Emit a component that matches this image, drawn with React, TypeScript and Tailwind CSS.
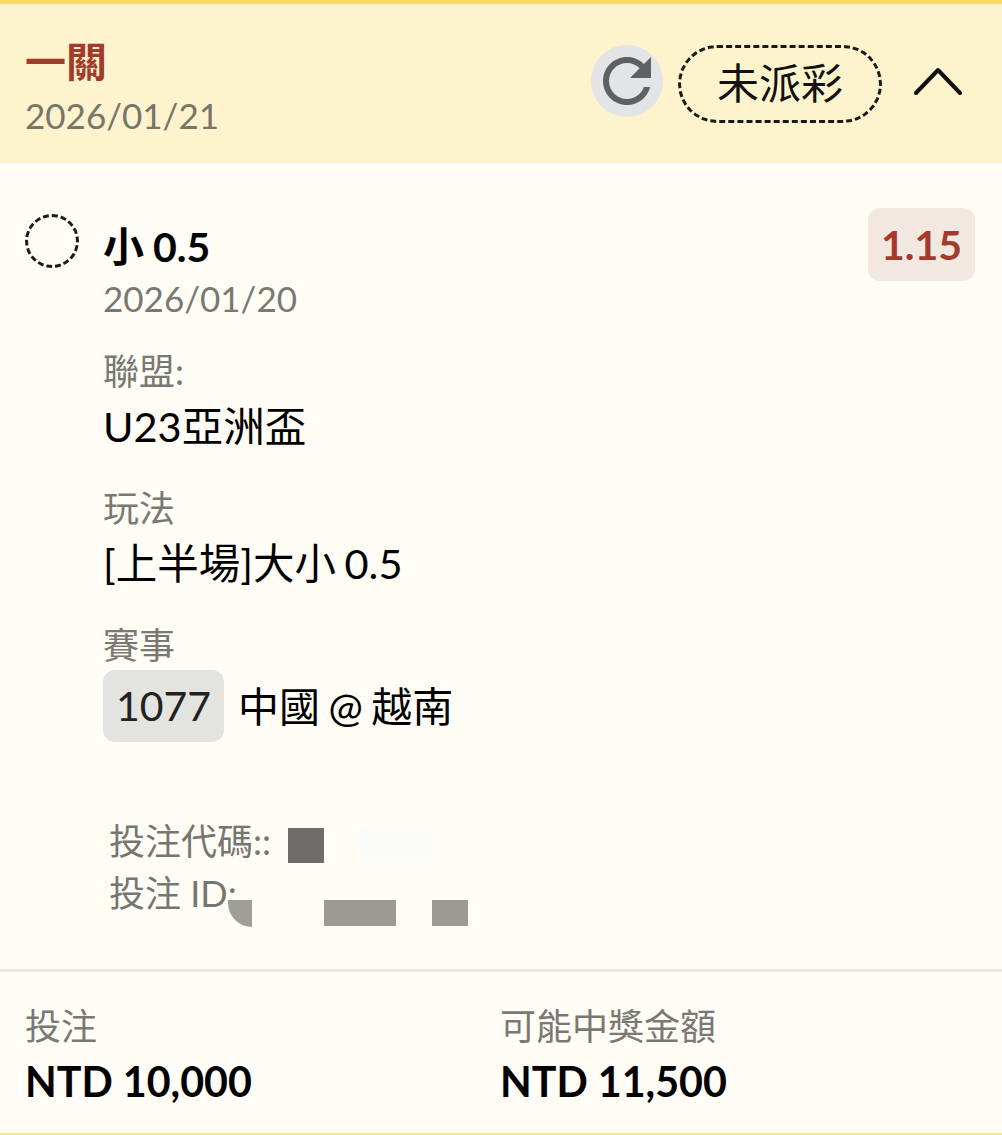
function RefreshIcon() {
  return (
    <svg viewBox="0 0 24 24" className="h-[72px] w-[72px] fill-[#5f6064]">
      <path d="M17.65 6.35C16.2 4.9 14.21 4 12 4c-4.42 0-7.99 3.58-7.99 8s3.57 8 7.99 8c3.73 0 6.84-2.55 7.73-6h-2.08c-.82 2.33-3.04 4-5.65 4-3.31 0-6-2.69-6-6s2.69-6 6-6c1.66 0 3.14.69 4.22 1.78L13 11h7V4l-2.35 2.35z" />
    </svg>
  )
}

function ChevronUp() {
  return (
    <svg viewBox="0 0 48 28" className="h-[28px] w-[48px] fill-none stroke-[#111]">
      <path d="M2 26 L24 3 L46 26" strokeWidth="4" strokeLinecap="round" strokeLinejoin="round" />
    </svg>
  )
}

function Field({ label, value }: { label: string; value: string }) {
  return (
    <div>
      <p className="text-[36px] leading-[44px] text-[#7a7872]">{label}</p>
      <p className="mt-[8px] text-[41.5px] leading-[50px] text-black [word-spacing:-2px]">{value}</p>
    </div>
  )
}

export default function App() {
  return (
    <div className="flex h-[1135px] w-[1002px] flex-col overflow-hidden border-t-[4px] border-b-[2px] border-t-[#fcdc5c] border-b-[#f7e68f] bg-[#fffdf6] font-['Lato','Noto_Sans_CJK_TC',sans-serif]">
      <header className="flex h-[159px] shrink-0 items-center justify-between bg-[#fdf3cc] pl-[25px] pr-[40px]">
        <div className="pt-[8px]">
          <h1 className="text-[41px] font-bold leading-[48px] text-[#a33a2c]">一關</h1>
          <p className="mt-[7px] text-[35px] leading-[44px] text-[#77746a]">2026/01/21</p>
        </div>
        <div className="flex items-center">
          <div className="mb-[6px] flex h-[72px] w-[72px] items-center justify-center rounded-full bg-[#e3e4e6]">
            <RefreshIcon />
          </div>
          <div className="ml-[15px] flex h-[78px] w-[204px] items-center justify-center rounded-[39px] border-[3px] border-dashed border-[#1a1a1a] text-[42px] text-[#111]">
            未派彩
          </div>
          <div className="mb-[5px] ml-[32px]">
            <ChevronUp />
          </div>
        </div>
      </header>

      <main className="flex-1 pl-[25px] pr-[27px] pt-[44px]">
        <div className="flex items-start justify-between">
          <div className="flex">
            <div className="mt-[7px] h-[54px] w-[54px] rounded-full border-[3px] border-dashed border-[#1a1a1a]" />
            <div className="ml-[24px]">
              <p className="mt-[16px] text-[41px] font-bold leading-[48px] text-black [word-spacing:-1px]">小 0.5</p>
              <p className="mt-[5px] text-[35px] leading-[44px] text-[#7a7872]">2026/01/20</p>
            </div>
          </div>
          <div className="mt-[1px] flex h-[73px] w-[107px] items-center justify-center rounded-[12px] bg-[#f3e7e1] text-[41px] font-bold text-[#a33a2c]">
            1.15
          </div>
        </div>

        <div className="ml-[78px] mt-[29px] space-y-[35px]">
          <Field label="聯盟:" value="U23亞洲盃" />
          <Field label="玩法" value="[上半場]大小 0.5" />
          <div>
            <p className="text-[36px] leading-[44px] text-[#7a7872]">賽事</p>
            <div className="mt-[3px] flex items-center">
              <span className="flex h-[72px] w-[121px] items-center justify-center rounded-[12px] bg-[#e3e3e0] text-[41px] text-[#222]">
                1077
              </span>
              <span className="ml-[14px] mt-[2px] text-[41px] text-black [word-spacing:-2px]">中國 @ 越南</span>
            </div>
          </div>
        </div>

        <div className="relative ml-[84px] mt-[73px] text-[36px] leading-[52px] text-[#77756f]">
          <p>投注代碼::</p>
          <p>投注 ID:</p>
          <span className="absolute left-[179px] top-[13px] h-[35px] w-[36px] bg-[#6f6d69]" />
          <span className="absolute left-[251px] top-[13px] h-[35px] w-[72px] bg-[#fbfbf7]" />
          <span className="absolute left-[119px] top-[85px] h-[27px] w-[24px] rounded-bl-[24px] bg-[#a09e98]" />
          <span className="absolute left-[215px] top-[85px] h-[26px] w-[72px] bg-[#9c9a94]" />
          <span className="absolute left-[323px] top-[85px] h-[26px] w-[36px] bg-[#9c9a94]" />
        </div>
      </main>

      <footer className="grid h-[164px] shrink-0 grid-cols-[475px_1fr] border-t-[3px] border-[#e8e8e4] pl-[25px] pt-[32px]">
        <div>
          <p className="text-[36px] leading-[44px] text-[#7a7872]">投注</p>
          <p className="mt-[9px] text-[41.2px] font-bold leading-[48px] text-black">NTD 10,000</p>
        </div>
        <div>
          <p className="text-[36px] leading-[44px] text-[#7a7872]">可能中獎金額</p>
          <p className="mt-[9px] text-[41.2px] font-bold leading-[48px] text-black">NTD 11,500</p>
        </div>
      </footer>
    </div>
  )
}
